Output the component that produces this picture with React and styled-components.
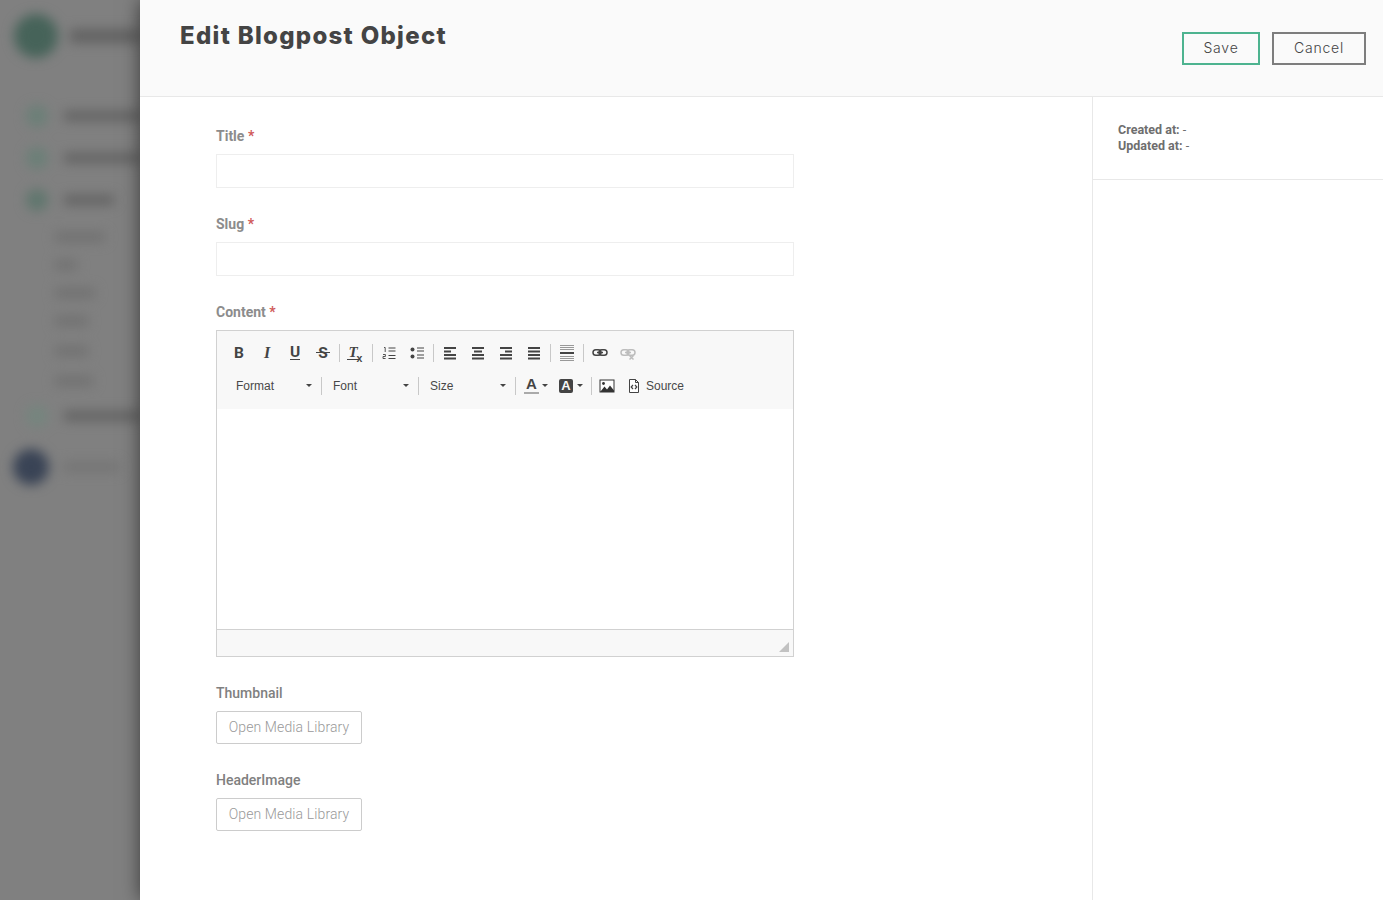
import React from "react";
import styled, { createGlobalStyle } from "styled-components";

const Global = createGlobalStyle`
  html, body { margin: 0; padding: 0; height: 100%; overflow: hidden; background: #808080; }
  #root { height: 100vh; }
  * { box-sizing: border-box; }
`;

const Page = styled.div`
  display: flex;
  height: 900px;
  overflow: hidden;
  background: #808080;
`;

const Sidebar = styled.aside`
  width: 140px;
  flex: none;
  overflow: hidden;
  filter: blur(6px);
  padding: 14px 0 0 14px;
  display: flex;
  flex-direction: column;
`;
const Brand = styled.div`
  display: flex;
  align-items: center;
  gap: 12px;
  height: 44px;
  margin-bottom: 37px;
`;
const BrandMark = styled.div`
  width: 44px;
  height: 44px;
  border-radius: 50%;
  flex: none;
  background: #466359;
`;
const Smudge = styled.div`
  height: ${(p) => p.$h || 10}px;
  width: ${(p) => p.$w}px;
  flex: none;
  margin-bottom: ${(p) => p.$mb || 0}px;
  background: ${(p) => p.$c || "#626262"};
`;
const NavRow = styled.div`
  display: flex;
  align-items: center;
  gap: 16px;
  height: 42px;
  padding-left: 12px;
`;
const NavDot = styled.div`
  width: 22px;
  height: 22px;
  flex: none;
  border-radius: 50%;
  background: ${(p) => p.$c};
`;
const SubList = styled.div`
  display: flex;
  flex-direction: column;
  gap: 18px;
  padding: 11px 0 9px 41px;
`;
const UserRow = styled.div`
  display: flex;
  align-items: center;
  gap: 14px;
  margin-top: 12px;
  margin-left: -1px;
`;
const Avatar = styled.div`
  width: 36px;
  height: 36px;
  flex: none;
  border-radius: 50%;
  background: #394355;
`;

const Panel = styled.main`
  flex: 1;
  min-width: 0;
  background: #fff;
  box-shadow: 0 0 18px rgba(0, 0, 0, 0.55);
  position: relative;
  display: flex;
  flex-direction: column;
`;
const Header = styled.header`
  height: 97px;
  flex: none;
  background: #fafafa;
  border-bottom: 1px solid #e8e8e8;
  display: flex;
  justify-content: space-between;
  align-items: flex-start;
  padding: 0 17px 0 40px;
`;
const Title = styled.h1`
  margin: 20px 0 0;
  font: 800 24px/32px Inter, sans-serif;
  letter-spacing: 1.3px;
  color: #444;
`;
const Actions = styled.div`
  display: flex;
  gap: 12px;
  margin-top: 32px;
`;
const ActionButton = styled.button`
  height: 33px;
  width: ${(p) => p.$w}px;
  padding: 0 0 2px;
  background: transparent;
  border: 2px solid ${(p) => p.$c};
  font: 300 14px/27px Inter, sans-serif;
  letter-spacing: 0.8px;
  color: #444;
`;
const Body = styled.div`
  flex: 1;
  display: flex;
  min-height: 0;
`;
const FormColumn = styled.section`
  width: 952px;
  flex: none;
  padding: 30px 0 0 76px;
`;
const Field = styled.div`
  width: 578px;
  margin-bottom: 27px;
`;
const Label = styled.label`
  display: block;
  font: ${(p) => (p.$strong ? 700 : 500)} 14px/18px Roboto, sans-serif;
  color: ${(p) => (p.$strong ? "#8c8c8c" : "#808080")};
  margin-bottom: 9px;
`;
const Required = styled.span`
  color: #d05a5a;
`;
const Input = styled.div`
  height: 34px;
  border: 1px solid #eee;
  background: #fff;
`;
const Editor = styled.div`
  height: 327px;
  border: 1px solid #d1d1d1;
  display: flex;
  flex-direction: column;
`;
const Toolbar = styled.div`
  height: 78px;
  flex: none;
  background: #f8f8f8;
  padding: 5px 0 0 8px;
`;
const ToolRow = styled.div`
  display: flex;
  align-items: center;
  height: 33px;
  margin-left: ${(p) => p.$ml || 0}px;
`;
const Tool = styled.span`
  width: ${(p) => p.$w || 28}px;
  height: 28px;
  flex: none;
  display: flex;
  align-items: center;
  justify-content: center;
`;
const Glyph = styled.span`
  font: 700 15.5px/16px Roboto, sans-serif;
  color: #444;
`;
const SerifGlyph = styled.span`
  font: italic 700 16px/16px "Liberation Serif", serif;
  color: #444;
`;
const UnderGlyph = styled(Glyph)`
  line-height: 13px;
  border-bottom: 1.5px solid #444;
`;
const StrikeGlyph = styled(Glyph)`
  position: relative;
  &::after {
    content: "";
    position: absolute;
    left: -2px;
    right: -2px;
    top: 7px;
    height: 1px;
    background: #444;
  }
`;
const ClearGlyph = styled.span`
  position: relative;
  font: italic 700 15px/13px "Liberation Serif", serif;
  border-bottom: 1.5px solid #444;
  color: #444;
  margin-left: -6px;
  padding: 0 1px;
`;
const ClearX = styled.span`
  position: absolute;
  left: 9px;
  top: 6px;
  font: 700 10.5px/12px "Liberation Sans", sans-serif;
  color: #444;
`;
const Sep = styled.span`
  width: 5px;
  height: 18px;
  flex: none;
  padding-left: 2px;
  &::before {
    content: "";
    display: block;
    width: 1px;
    height: 100%;
    background: #c8c8c8;
  }
`;
const Combo = styled.span`
  width: 92px;
  height: 28px;
  flex: none;
  display: flex;
  align-items: center;
  justify-content: space-between;
  padding: 0 7px 0 9px;
  font: 400 12px/16px "Liberation Sans", Arial, sans-serif;
  color: #484848;
`;
const Caret = styled.i`
  width: 0;
  height: 0;
  flex: none;
  border-left: 3px solid transparent;
  border-right: 3px solid transparent;
  border-top: 3px solid #444;
`;
const ColorTool = styled.span`
  width: ${(p) => p.$w}px;
  height: 28px;
  flex: none;
  display: flex;
  align-items: center;
  gap: ${(p) => p.$gap}px;
  padding-left: ${(p) => p.$pl}px;
`;
const TextColorA = styled.span`
  width: 15px;
  height: 17px;
  text-align: center;
  font: 700 15px/14px "Liberation Sans", sans-serif;
  color: #444;
  border-bottom: 2px solid #aaa;
`;
const BgColorA = styled.span`
  width: 14px;
  height: 14px;
  border-radius: 2px;
  background: #444;
  text-align: center;
  font: 700 13px/14px "Liberation Sans", sans-serif;
  color: #f8f8f8;
`;
const SourceTool = styled.span`
  display: flex;
  align-items: center;
  gap: 6px;
  padding-left: 8px;
  font: 400 12px/16px "Liberation Sans", Arial, sans-serif;
  color: #484848;
`;
const EditArea = styled.div`
  flex: 1;
  background: #fff;
`;
const EditorFoot = styled.div`
  height: 27px;
  flex: none;
  background: #f8f8f8;
  border-top: 1px solid #d1d1d1;
  display: flex;
  justify-content: flex-end;
  align-items: flex-end;
  padding: 0 4px 4px 0;
`;
const MediaButton = styled.button`
  display: block;
  width: 146px;
  height: 33px;
  padding: 0;
  background: #fff;
  border: 1px solid #ccc;
  border-radius: 2px;
  font: 300 14px/31px Roboto, sans-serif;
  letter-spacing: 0.12px;
  color: #999;
`;
const MetaColumn = styled.aside`
  flex: 1;
  border-left: 1px solid #e8e8e8;
`;
const MetaBox = styled.div`
  height: 83px;
  padding: 25px 0 0 25px;
  border-bottom: 1px solid #e8e8e8;
  font: 400 12.5px/16px Roboto, sans-serif;
  color: #6e6e6e;
`;
const MetaLine = styled.div``;
const Strong = styled.strong`
  font-weight: 700;
`;

const Ico = ({ children, w = 16, h = 16 }) => (
  <svg width={w} height={h} viewBox={`0 0 ${w} ${h}`} fill="none" stroke="#444" strokeWidth="1">
    {children}
  </svg>
);

const Lines = ({ rows }) => (
  <Ico>
    {rows.map(([a, b], i) => (
      <path key={i} d={`M${a} ${3 + i * 3.5}H${b}`} strokeWidth="2" />
    ))}
  </Ico>
);

const OrderedIcon = () => (
  <Ico>
    <path d="M3 2.5h1.2V7" strokeWidth="0.9" />
    <path d="M7.5 3h7M7.5 6h7M7.5 10.5h7M7.5 13.5h7" />
    <path d="M2 9.5h2.4v2H2v2h2.6" strokeWidth="0.9" />
  </Ico>
);
const BulletIcon = () => (
  <Ico>
    <circle cx="3.5" cy="4.5" r="2" fill="#444" stroke="none" />
    <circle cx="3.5" cy="11.5" r="2" fill="#444" stroke="none" />
    <path d="M8 3h7M8 6h7M8 10h7M8 13h7" />
  </Ico>
);
const HrIcon = () => (
  <Ico h={18}>
    <path d="M1 1.5h14M1 3.5h14M1 5.5h14M1 12.5h14M1 14.5h14M1 16.5h14" stroke="#999" />
    <path d="M1 9h14" strokeWidth="2" />
  </Ico>
);
const LinkIcon = ({ off }) => (
  <Ico>
    <g stroke={off ? "#bdbdbd" : "#444"} strokeWidth="1.5">
      <rect x="1" y="4.7" width="8" height="5.6" rx="2.8" />
      <rect x="7" y="4.7" width="8" height="5.6" rx="2.8" />
      <path d="M5 7.5h6" />
      {off && <path d="M9.5 10.5l4 4M13.5 10.5l-4 4" />}
    </g>
  </Ico>
);
const ImageIcon = () => (
  <Ico h={14}>
    <rect x="1" y="1" width="14" height="12" fill="#fff" stroke="#333" />
    <path d="M1.5 12.5l4-5 2.5 3 3-4 4 5V13h-14z" fill="#333" stroke="none" />
    <circle cx="4.5" cy="4.5" r="1.4" fill="#333" stroke="none" />
  </Ico>
);
const SourceIcon = () => (
  <Ico w={12} h={14}>
    <path d="M1.5 0.5h6l3 3v10h-9zM7.5 0.5v3h3" fill="#fff" />
    <path d="M5 6L3.2 8 5 10M7 6l1.8 2L7 10" strokeWidth="1.2" />
  </Ico>
);

const SubRows = [
  [50, 0],
  [22, 0],
  [40, 0],
  [33, 2],
  [33, 2],
  [38, 0],
];

export default function App() {
  return (
    <>
      <Global />
      <Page>
        <Sidebar>
          <Brand>
            <BrandMark />
            <Smudge $w={70} $h={14} $c="#626262" />
          </Brand>
          <NavRow>
            <NavDot $c="#6b7f77" />
            <Smudge $w={80} />
          </NavRow>
          <NavRow>
            <NavDot $c="#6b7f77" />
            <Smudge $w={80} />
          </NavRow>
          <NavRow>
            <NavDot $c="#5f766d" />
            <Smudge $w={50} />
          </NavRow>
          <SubList>
            {SubRows.map(([w, mb], i) => (
              <Smudge key={i} $w={w} $mb={mb} $c="#707070" />
            ))}
          </SubList>
          <NavRow>
            <NavDot $c="#75857e" />
            <Smudge $w={80} />
          </NavRow>
          <UserRow>
            <Avatar />
            <Smudge $w={56} $c="#747474" />
          </UserRow>
        </Sidebar>
        <Panel>
          <Header>
            <Title>Edit Blogpost Object</Title>
            <Actions>
              <ActionButton $w={78} $c="#4db38f">Save</ActionButton>
              <ActionButton $w={94} $c="#7d7d7d">Cancel</ActionButton>
            </Actions>
          </Header>
          <Body>
            <FormColumn>
              <Field>
                <Label $strong>Title <Required>*</Required></Label>
                <Input />
              </Field>
              <Field>
                <Label $strong>Slug <Required>*</Required></Label>
                <Input />
              </Field>
              <Field>
                <Label $strong>Content <Required>*</Required></Label>
                <Editor>
                  <Toolbar>
                    <ToolRow>
                      <Tool><Glyph>B</Glyph></Tool>
                      <Tool><SerifGlyph>I</SerifGlyph></Tool>
                      <Tool><UnderGlyph>U</UnderGlyph></Tool>
                      <Tool><StrikeGlyph>S</StrikeGlyph></Tool>
                      <Sep />
                      <Tool><ClearGlyph>T<ClearX>x</ClearX></ClearGlyph></Tool>
                      <Sep />
                      <Tool><OrderedIcon /></Tool>
                      <Tool><BulletIcon /></Tool>
                      <Sep />
                      <Tool><Lines rows={[[2, 14], [2, 9], [2, 14], [2, 14]]} /></Tool>
                      <Tool><Lines rows={[[2, 14], [4, 12], [2, 14], [2, 14]]} /></Tool>
                      <Tool><Lines rows={[[2, 14], [7, 14], [2, 14], [2, 14]]} /></Tool>
                      <Tool><Lines rows={[[2, 14], [2, 14], [2, 14], [2, 14]]} /></Tool>
                      <Sep />
                      <Tool><HrIcon /></Tool>
                      <Sep />
                      <Tool><LinkIcon /></Tool>
                      <Tool><LinkIcon off /></Tool>
                    </ToolRow>
                    <ToolRow $ml={2}>
                      <Combo>Format<Caret /></Combo>
                      <Sep />
                      <Combo>Font<Caret /></Combo>
                      <Sep />
                      <Combo>Size<Caret /></Combo>
                      <Sep />
                      <ColorTool $w={34} $pl={6} $gap={3}><TextColorA>A</TextColorA><Caret /></ColorTool>
                      <ColorTool $w={37} $pl={7} $gap={4}><BgColorA>A</BgColorA><Caret /></ColorTool>
                      <Sep />
                      <Tool $w={26}><ImageIcon /></Tool>
                      <SourceTool><SourceIcon />Source</SourceTool>
                    </ToolRow>
                  </Toolbar>
                  <EditArea />
                  <EditorFoot>
                    <svg width="10" height="10" viewBox="0 0 10 10"><path d="M10 0v10H0z" fill="#c2c2c2" /></svg>
                  </EditorFoot>
                </Editor>
              </Field>
              <Field>
                <Label>Thumbnail</Label>
                <MediaButton>Open Media Library</MediaButton>
              </Field>
              <Field>
                <Label>HeaderImage</Label>
                <MediaButton>Open Media Library</MediaButton>
              </Field>
            </FormColumn>
            <MetaColumn>
              <MetaBox>
                <MetaLine><Strong>Created at:</Strong> -</MetaLine>
                <MetaLine><Strong>Updated at:</Strong> -</MetaLine>
              </MetaBox>
            </MetaColumn>
          </Body>
        </Panel>
      </Page>
    </>
  );
}
